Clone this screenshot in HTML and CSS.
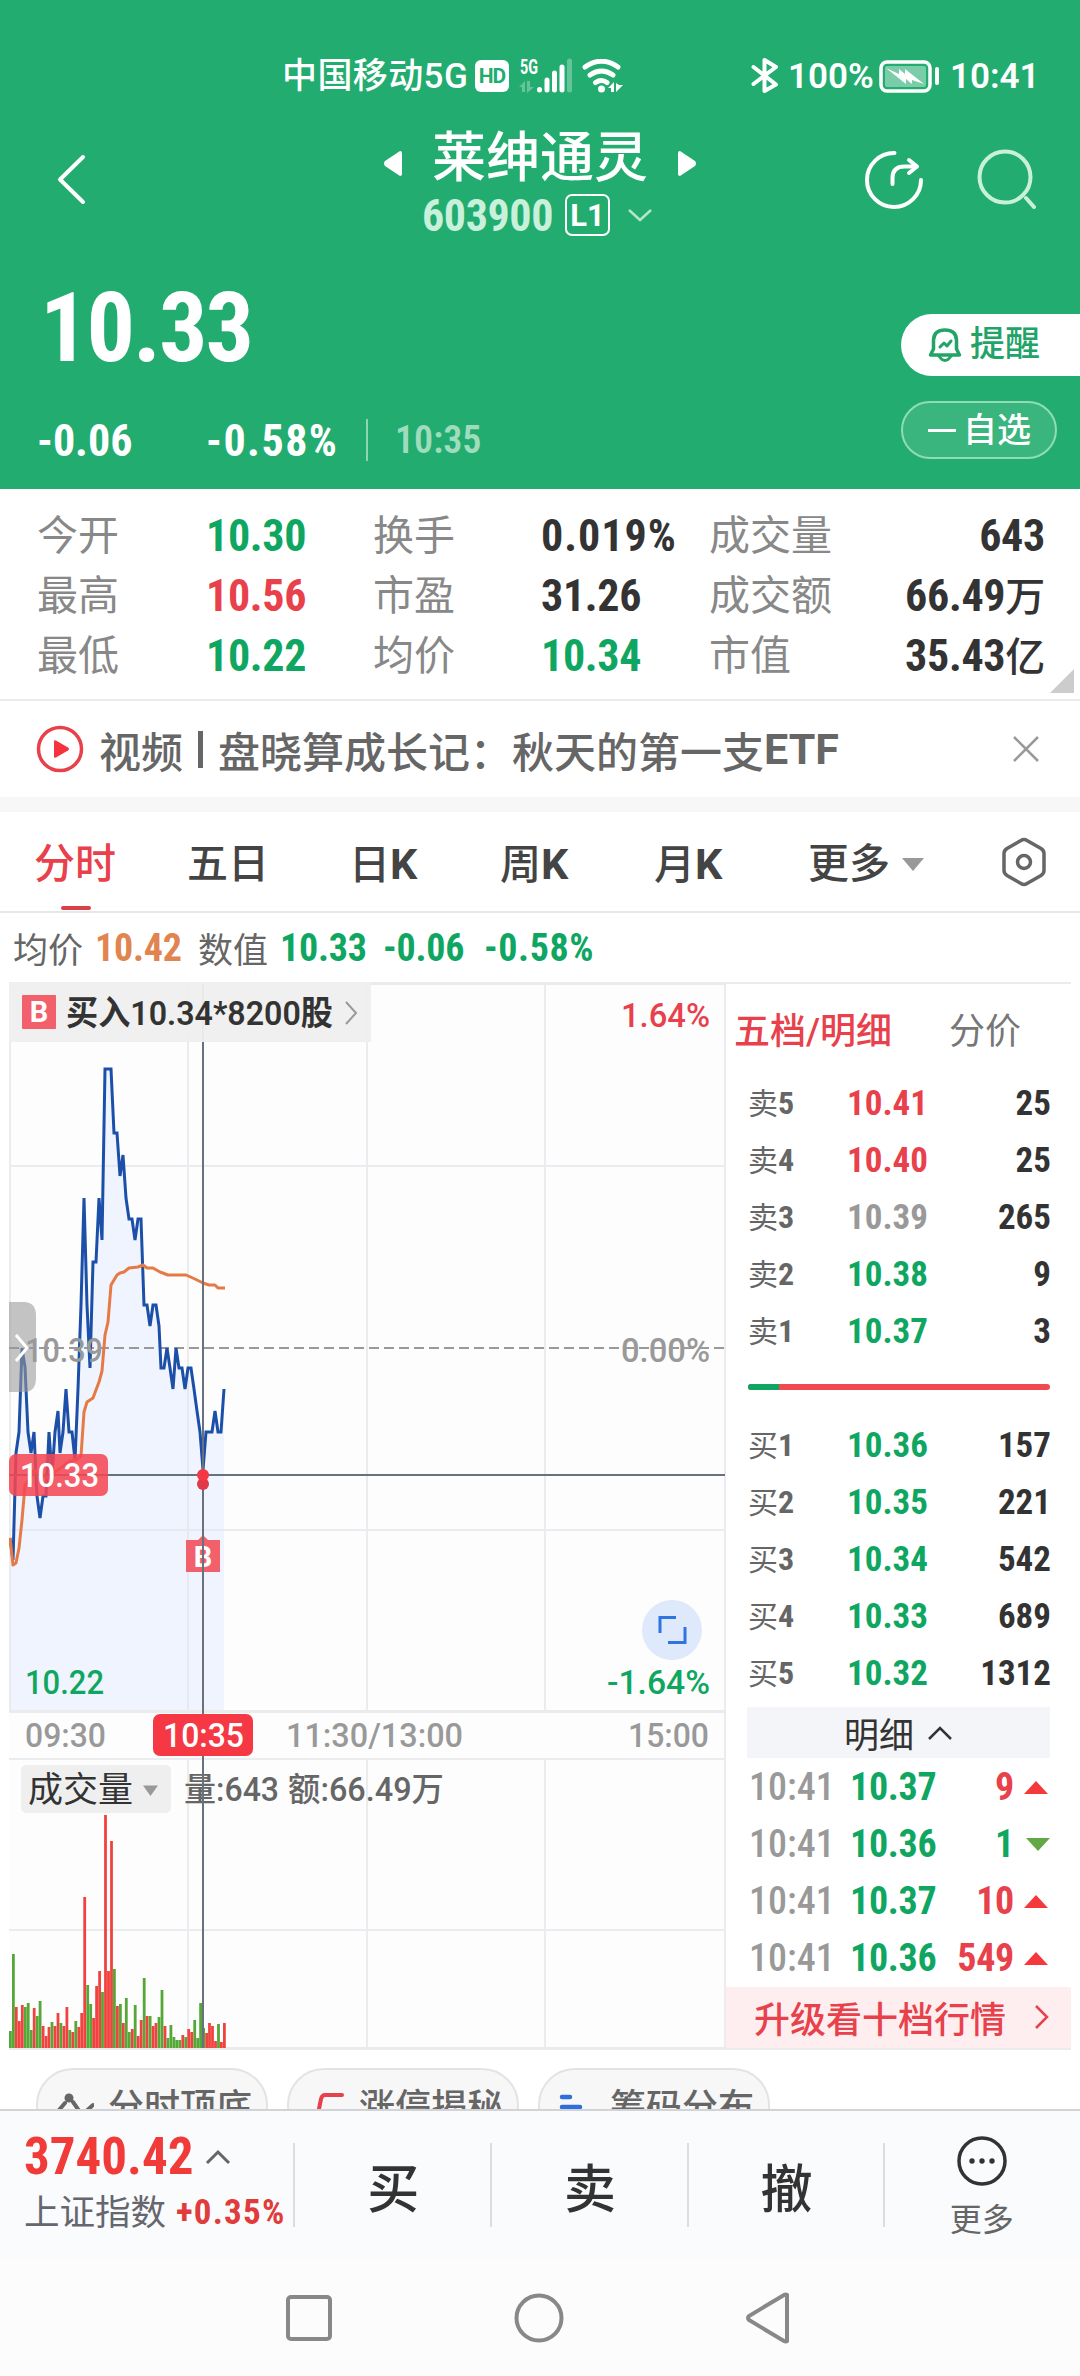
FILE: index.html
```html
<!DOCTYPE html>
<html lang="zh-CN">
<head>
	<meta charset="utf-8">
	<title>莱绅通灵 603900</title>
	<link rel="stylesheet" href="styles.css">
</head>
<body>
<div class="phone">
	<header class="top">
		<div class="status">
			<span class="carrier">中国移动5G</span>
			<span class="hd">HD</span>
			<svg class="signal" width="52" height="34" viewBox="520 58 52 34">
				<text x="520" y="73" class="sig-text" textLength="18" lengthAdjust="spacingAndGlyphs">5G</text>
				<path d="M519 86l6-6v11h-3v-5zM527 80h3v6h4l-7 6z" fill="#fff" opacity=".3"/>
				<path d="M539.500 88.500v.5M547 79v10M554.500 72v17M562 66v23" stroke="#fff" stroke-width="5" stroke-linecap="round"/>
				<path d="M569.500 60v29" stroke="#fff" stroke-width="5" stroke-linecap="round" opacity=".3"/>
			</svg>
			<svg class="wifi" width="42" height="34" viewBox="582 58 42 34">
				<g fill="none" stroke="#fff" stroke-width="5" stroke-linecap="round">
					<path d="M585 66Q601.500 54.500 618 66M590 74Q601.500 66 613 74M595.500 81.500Q601.500 77.500 607 81.500"/>
				</g>
				<circle cx="601.500" cy="88" r="3.500" fill="#fff"/>
				<path d="M608 87l6-6v10h-3v-4zM616 82v9l7-7h-4z" fill="#fff"/>
			</svg>
			<svg class="bluetooth" width="28" height="36" viewBox="750 58 28 36">
				<path d="M752.500 67L775 84.500L763.500 91V60L775 67L752.500 84" fill="none" stroke="#fff" stroke-width="4" stroke-linecap="round" stroke-linejoin="round"/>
			</svg>
			<span class="percent">100%</span>
			<svg class="battery" width="60" height="34" viewBox="878 58 60 34">
				<rect x="880" y="61" width="49" height="29" rx="6" fill="none" stroke="#fff" stroke-width="3.500"/>
				<rect x="884" y="65" width="41" height="21" rx="2" fill="#fff" opacity=".4"/>
				<path d="M885 67l13 6v-5l6 5v-5l19 15-12-4v4l-6-5v5z" fill="#fff"/>
				<path d="M936 68v14" stroke="#fff" stroke-width="4" stroke-linecap="round"/>
			</svg>
			<span class="clock">10:41</span>
		</div>

		<nav class="titlebar">
			<svg class="back" width="30" height="52" viewBox="57 153 30 52"><path d="M83 157L60 179.500L83 202" fill="none" stroke="#fff" stroke-width="4" stroke-linecap="round" stroke-linejoin="round"/></svg>
			<div class="stock">
				<div class="name">
					<svg width="18" height="27" viewBox="0 0 18 27"><path d="M16 1q2 0 2 2v21q0 2-2 2L1 16q-2-2.500 0-5z" fill="#fff"/></svg>
					<h1>莱绅通灵</h1>
					<svg width="18" height="27" viewBox="0 0 18 27"><path d="M2 1Q0 1 0 3v21q0 2 2 2L17 16q2-2.500 0-5z" fill="#fff"/></svg>
				</div>
				<div class="code">
					<span class="num">603900</span>
					<span class="level">L1</span>
					<svg width="26" height="16" viewBox="0 0 26 16"><path d="M2 3l11 10L24 3" fill="none" stroke="#b5e6cb" stroke-width="2.500"/></svg>
				</div>
			</div>
			<svg class="share" width="60" height="60" viewBox="864 150 60 60">
				<g fill="none" stroke="#fff" stroke-width="4" stroke-linecap="round" stroke-linejoin="round">
					<path d="M894.500 153A27 27 0 1 0 921 180M892.500 184v-6q0-11.500 12-11.500h12"/>
					<path d="M909 160l8 6.500-8 6.500"/>
				</g>
			</svg>
			<svg class="search" width="60" height="60" viewBox="977 149 60 60">
				<g fill="none" stroke="#c9f1d9" stroke-width="4" stroke-linecap="round">
					<circle cx="1005" cy="177" r="25.500"/>
					<path d="M1026 198l8 9"/>
				</g>
			</svg>
		</nav>

		<div class="price">
			<div class="price-left">
				<div class="now num">10.33</div>
				<div class="change">
					<span class="num diff">-0.06</span>
					<span class="num rate">-0.58%</span>
					<span class="num at">10:35</span>
				</div>
			</div>
			<div class="price-right">
				<div class="remind">
					<svg width="34" height="36" viewBox="928 328 34 36">
						<g fill="none" stroke="#22a468" stroke-width="3.500" stroke-linecap="round" stroke-linejoin="round">
							<path d="M930.500 356H959.500L956.500 350V341Q956 331 945 331T933.500 341V350Z"/>
							<path d="M939 357q6 9 12 0M940 348l4-4 3 3 4-5" stroke-width="3"/>
						</g>
					</svg>
					<span>提醒</span>
				</div>
				<div class="fav"><i></i><span>自选</span></div>
			</div>
		</div>
	</header>

	<section class="stats">
		<span>今开</span><b class="green">10.30</b><span>换手</span><b class="wide">0.019%</b><span>成交量</span><b class="right">643</b>
		<span>最高</span><b class="red">10.56</b><span>市盈</span><b>31.26</b><span>成交额</span><b class="right">66.49<em>万</em></b>
		<span>最低</span><b class="green">10.22</b><span>均价</span><b class="green">10.34</b><span>市值</span><b class="right">35.43<em>亿</em></b>
		<i class="corner"></i>
	</section>

	<section class="news">
		<svg width="48" height="48" viewBox="0 0 48 48"><circle cx="24" cy="24" r="21.500" fill="none" stroke="#e8414b" stroke-width="3.500"/><path d="M18 16.500v15q0 2 2 1l12-7q2-1.500 0-3l-12-7q-2-1-2 1z" fill="#f5333f"/></svg>
		<p>视频<i></i>盘晓算成长记：秋天的第一支<b>ETF</b></p>
		<svg class="close" width="28" height="28" viewBox="0 0 28 28"><path d="M2 2l24 24M26 2L2 26" stroke="#999" stroke-width="2.500"/></svg>
	</section>

	<section class="tabs">
		<span class="on">分时</span>
		<span>五日</span>
		<span>日<b>K</b></span>
		<span>周<b>K</b></span>
		<span>月<b>K</b></span>
		<span>更多<i></i></span>
		<svg width="44" height="50" viewBox="0 0 44 50"><path d="M19 3.500q3-2 6 0l14 8q3 2 3 5v17q0 3-3 5l-14 8q-3 2-6 0l-14-8q-3-2-3-5v-17q0-3 3-5z" fill="none" stroke="#666" stroke-width="3.500"/><circle cx="22" cy="25" r="6.500" fill="none" stroke="#666" stroke-width="3.500"/></svg>
	</section>

	<section class="info">
		<span>均价</span><b class="orange">10.42</b><span>数值</span><b class="green">10.33</b><b class="green">-0.06</b><b class="green wide">-0.58%</b>
	</section>

	<main class="board">
		<svg class="chart" width="717" height="1068" viewBox="9 982 717 1068">
			<rect x="9" y="982" width="717" height="1068" fill="#fdfdfd"/>
			<!-- 分时面积 -->
			<path id="area" fill="#eff4fe"/>
			<!-- 网格 -->
			<path stroke="#e3e5ea" stroke-opacity=".75" stroke-width="2" fill="none" d="M10 983V1711M188 983V1711M367 983V1711M545 983V1711M9 1166H725M9 1530H725M188 1759V2049M367 1759V2049M545 1759V2049M9 1759H725M9 1930H725M725 983V2049"/>
			<path stroke="#ebebeb" stroke-width="3" d="M9 983.500H726M9 1711.500H726M9 2048.500H726"/>
			<path stroke="#999" stroke-width="2" stroke-dasharray="10 5" d="M9 1348H725"/>
			<polyline id="line" fill="none" stroke="#1c4fa8" stroke-width="3"/>
			<polyline id="avg" fill="none" stroke="#e67a45" stroke-width="3" stroke-linejoin="round"/>

			<g class="axis">
				<text x="25" y="1362" fill="#999" textLength="78" lengthAdjust="spacingAndGlyphs">10.39</text>
				<text x="25" y="1694" fill="#0fa662" textLength="79" lengthAdjust="spacingAndGlyphs">10.22</text>
				<text x="621" y="1027" fill="#e8414b" textLength="89" lengthAdjust="spacingAndGlyphs">1.64%</text>
				<text x="621" y="1362" fill="#999" textLength="89" lengthAdjust="spacingAndGlyphs">0.00%</text>
				<text x="607" y="1694" fill="#0fa662" textLength="103" lengthAdjust="spacingAndGlyphs">-1.64%</text>
				<text x="25" y="1747" fill="#999" textLength="81" lengthAdjust="spacingAndGlyphs">09:30</text>
				<text x="286" y="1747" fill="#999" textLength="177" lengthAdjust="spacingAndGlyphs">11:30/13:00</text>
				<text x="628" y="1747" fill="#999" textLength="81" lengthAdjust="spacingAndGlyphs">15:00</text>
			</g>

			<!-- 侧边抽屉 -->
			<path d="M9 1302H24q12 0 12 14V1378q0 14-12 14H9z" fill="#9a9a9a" opacity=".58"/>
			<path d="M16 1335l11 13-11 13" fill="none" stroke="#fff" stroke-width="3"/>

			<!-- 成交量 -->
			<rect x="21" y="1765" width="150" height="48" rx="5" fill="#efefef"/>
			<text x="28" y="1802" class="vol-name">成交量</text>
			<path d="M143 1785.500h15l-7.500 10.500z" fill="#999"/>
			<text x="184" y="1801" class="vol-text" textLength="95" lengthAdjust="spacingAndGlyphs">量:643</text>
			<text x="288" y="1801" class="vol-text" textLength="156" lengthAdjust="spacingAndGlyphs">额:66.49万</text>
			<g id="bars"></g>

			<!-- 买入提示 -->
			<path d="M186 1540h12l5-5 5 5h12v32h-34z" fill="#f2606b"/>
			<text x="203" y="1567" class="mark" text-anchor="middle">B</text>
			<!-- 十字光标 -->
			<path stroke="#68727f" stroke-width="2" d="M203 984V2048M9 1475H725"/>
			<circle cx="203" cy="1484" r="6" fill="#e03a48"/>
			<circle cx="203" cy="1475" r="6" fill="#f53844"/>
			<rect x="9" y="1454" width="99" height="42" rx="7" fill="#f54653" fill-opacity=".87"/>
			<text x="20" y="1487" class="axis" fill="#fff" textLength="79" lengthAdjust="spacingAndGlyphs">10.33</text>
			<rect x="153" y="1714" width="100" height="42" rx="7" fill="#f53844"/>
			<text x="163" y="1747" class="axis" fill="#fff" textLength="81" lengthAdjust="spacingAndGlyphs">10:35</text>

			<rect x="9" y="982" width="362" height="60" fill="#efefef" fill-opacity=".95"/>
			<rect x="22" y="995" width="34" height="34" rx="1" fill="#f2606b"/>
			<text x="39" y="1022" class="mark" text-anchor="middle">B</text>
			<text x="66" y="1025" class="tip" textLength="267" lengthAdjust="spacingAndGlyphs">买入10.34*8200股</text>
			<path d="M346 1002l10 11-10 11" fill="none" stroke="#999" stroke-width="2"/>

			<circle cx="672" cy="1630" r="30" fill="#dfe9fc"/>
			<path d="M676 1617.500H660V1633M668 1642.500H685V1627" fill="none" stroke="#2f74e0" stroke-width="3"/>
		</svg>

		<aside class="book">
			<div class="book-tabs"><span class="on">五档/明细</span><span>分价</span></div>
			<ul>
				<li><span>卖<b>5</b></span><b class="red">10.41</b><b>25</b></li>
				<li><span>卖<b>4</b></span><b class="red">10.40</b><b>25</b></li>
				<li><span>卖<b>3</b></span><b class="gray">10.39</b><b>265</b></li>
				<li><span>卖<b>2</b></span><b class="green">10.38</b><b>9</b></li>
				<li><span>卖<b>1</b></span><b class="green">10.37</b><b>3</b></li>
			</ul>
			<div class="ratio"><i style="width:10.2%"></i></div>
			<ul>
				<li><span>买<b>1</b></span><b class="green">10.36</b><b>157</b></li>
				<li><span>买<b>2</b></span><b class="green">10.35</b><b>221</b></li>
				<li><span>买<b>3</b></span><b class="green">10.34</b><b>542</b></li>
				<li><span>买<b>4</b></span><b class="green">10.33</b><b>689</b></li>
				<li><span>买<b>5</b></span><b class="green">10.32</b><b>1312</b></li>
			</ul>
			<div class="detail-head">明细<svg width="26" height="16" viewBox="0 0 26 16"><path d="M2 14L13 3l11 11" fill="none" stroke="#333" stroke-width="2.500"/></svg></div>
			<ul class="detail">
				<li><span>10:41</span><b class="green">10.37</b><b class="red">9</b><i class="up"></i></li>
				<li><span>10:41</span><b class="green">10.36</b><b class="green">1</b><i class="down"></i></li>
				<li><span>10:41</span><b class="green">10.37</b><b class="red">10</b><i class="up"></i></li>
				<li><span>10:41</span><b class="green">10.36</b><b class="red">549</b><i class="up"></i></li>
			</ul>
			<div class="upgrade">升级看十档行情<svg width="15" height="24" viewBox="0 0 15 24"><path d="M2 1l11 11L2 23" fill="none" stroke="#e8414b" stroke-width="2.500"/></svg></div>
		</aside>
	</main>

	<section class="pills">
		<div>
			<svg width="38" height="40" viewBox="0 0 38 40"><g fill="none" stroke="#666" stroke-width="4" stroke-linecap="round"><path d="M3 17l6-7M17 9l9 13 11-10"/></g><circle cx="13" cy="5" r="4.500" fill="#666"/></svg>
			<span>分时顶底</span>
		</div>
		<div>
			<svg width="38" height="40" viewBox="0 0 38 40"><path d="M3 21h5q3 0 4-5l2-10q1-4 4-4h17" fill="none" stroke="#e8414b" stroke-width="4" stroke-linecap="round"/></svg>
			<span>涨停揭秘</span>
		</div>
		<div>
			<svg width="38" height="40" viewBox="0 0 38 40"><path d="M4 4h8M4 14h18M4 23h30" stroke="#2f6fdc" stroke-width="4.500" stroke-linecap="round"/></svg>
			<span>筹码分布</span>
		</div>
	</section>

	<footer class="trade">
		<div class="index">
			<div class="index-num"><b>3740.42</b><svg width="26" height="16" viewBox="0 0 26 16"><path d="M2 14L13 3l11 11" fill="none" stroke="#666" stroke-width="3"/></svg></div>
			<div class="index-name">上证指数<b>+0.35%</b></div>
		</div>
		<div class="act">买</div>
		<div class="act">卖</div>
		<div class="act">撤</div>
		<div class="more">
			<svg width="52" height="52" viewBox="0 0 52 52"><circle cx="26" cy="26" r="23" fill="none" stroke="#333" stroke-width="3.500"/><circle cx="16" cy="26" r="2.700" fill="#333"/><circle cx="26" cy="26" r="2.700" fill="#333"/><circle cx="36" cy="26" r="2.700" fill="#333"/></svg>
			<span>更多</span>
		</div>
	</footer>

	<div class="sysnav">
		<svg width="46" height="46" viewBox="0 0 46 46"><rect x="2" y="2" width="42" height="42" rx="3" fill="none" stroke="#888" stroke-width="4"/></svg>
		<svg width="50" height="50" viewBox="0 0 50 50"><circle cx="25" cy="25" r="22.500" fill="none" stroke="#888" stroke-width="4"/></svg>
		<svg width="46" height="52" viewBox="0 0 46 52"><path d="M42 3v46q-1 1-3 0L4 28q-2-2 0-4L39 3q2-1 3 0z" fill="none" stroke="#888" stroke-width="4"/></svg>
	</div>
</div>

<script>
	//价格线
	var price = "10,1538 13,1560 16,1453 19,1432 22,1348 25,1367 28,1432 31,1453 34,1432 37,1496 40,1518 43,1496 46,1496 49,1432 52,1475 55,1432 58,1411 60,1453 63,1432 66,1389 69,1432 72,1432 75,1460 78,1389 81,1305 84,1198 87,1305 90,1368 93,1262 96,1262 99,1198 102,1240 105,1069 111,1069 114,1133 117,1133 120,1176 123,1155 126,1198 129,1219 132,1219 135,1240 138,1219 141,1219 144,1305 147,1305 150,1326 153,1305 156,1305 159,1326 161,1368 164,1368 167,1348 170,1368 173,1389 176,1348 179,1368 182,1368 185,1389 188,1368 191,1368 194,1389 197,1411 200,1432 203,1470 206,1432 212,1432 215,1411 218,1432 221,1432 224,1389"
	//均价线
	var avg = "10,1538 13,1565 16,1563 19,1548 22,1520 25,1485 30,1478 34,1470 40,1474 48,1478 55,1472 62,1467 70,1461 76,1460 81,1456 84,1412 87,1402 93,1398 99,1382 102,1371 105,1335 108,1322 111,1285 114,1280 117,1275 120,1273 124,1272 129,1268 138,1267 143,1265 147,1268 153,1268 160,1272 168,1275 186,1275 195,1279 203,1283 209,1285 215,1285 218,1288 225,1288"
	//每分钟成交量,负数为绿柱
	var vol = [-17,-94,41,27,43,-41,-45,-18,40,-32,-47,22,12,21,-26,22,35,-25,22,41,-18,16,-27,21,35,151,-63,-44,30,62,77,-56,233,77,207,-79,42,-44,25,-50,-16,19,-43,12,28,-70,32,-32,22,25,-31,-58,22,-10,-23,-11,-8,-8,13,-11,19,16,-28,-10,-45,-20,15,25,22,7,-24,6,25]

	document.getElementById("line").setAttribute("points", price)
	document.getElementById("avg").setAttribute("points", avg)
	document.getElementById("area").setAttribute("d", "M" + price + " 224,1711 10,1711z")
	var html = ""
	for(var i=0;i<vol.length;i++){
		var x = 9 + i * 214 / (vol.length - 1)
		var h = Math.abs(vol[i])
		html += `<rect x="${x.toFixed(1)}" y="${2048-h}" width="2.8" height="${h}" fill="${vol[i]<0 ? '#55a838' : '#f0423f'}"/>`
	}
	document.getElementById("bars").innerHTML = html
</script>
</body>
</html>
```
FILE: styles.css
```css
*{box-sizing:border-box;}
body{
	margin:0;
	background:#fff;
	font-family:Roboto,"Noto Sans CJK SC",sans-serif;
	color:#333;
}
h1,p,ul{margin:0;padding:0;list-style:none;}
i,em{font-style:normal;}
svg{display:block;flex:none;}
b{font-weight:700;font-stretch:75%;}
.phone{
	width:1080px;height:2376px;
	display:flex;flex-direction:column;
	overflow:hidden;
}
.red{color:#e8414b;}
.green{color:#0fa662;}
.gray{color:#999;}
.orange{color:#e08450;}
.num{font-weight:700;font-stretch:75%;}

/* 顶部 */
.top{
	height:489px;flex:none;
	background:#22ac6f;
	color:#fff;
}
.status{
	height:100px;
	padding:52px 0 0 282px;
	display:flex;align-items:center;
	font-size:35px;line-height:48px;font-weight:500;
	white-space:nowrap;
}
.carrier{width:193px;padding-top:2px;letter-spacing:.4px;}
.hd{
	width:34px;height:32px;
	border-radius:6px;
	background:#fff;color:#22ac6f;
	font-size:21px;line-height:33px;font-weight:700;
	text-align:center;letter-spacing:-1px;
}
.signal{margin-left:11px;overflow:visible;}
.sig-text{font-size:20px;font-weight:700;fill:#fff;}
.wifi{margin-left:10px;}
.bluetooth{margin-left:127px;}
.percent{width:91px;margin-left:9px;padding-top:1px;font-weight:600;}
.battery{margin-right:11px;}
.clock{padding-top:1px;font-weight:600;}
.titlebar{
	height:160px;
	padding:27px 43px 0 57px;
	display:flex;
}
.back{margin-top:26px;}
.stock{width:460px;margin-left:223px;}
.name{
	height:60px;
	display:flex;align-items:center;justify-content:center;
	gap:30px;
}
.name svg{margin-top:13px;}
.name h1{padding-top:4px;font-size:54px;line-height:60px;font-weight:500;}
.code{
	height:44px;margin-top:6px;
	padding-left:112px;
	display:flex;align-items:center;
}
.code .num{width:143px;padding-top:1px;font-size:44px;line-height:44px;letter-spacing:-.4px;color:#c8f0da;}
.level{
	width:45px;height:42px;
	border:2px solid #fff;border-radius:7px;
	font-size:31px;line-height:39px;font-weight:700;
	text-align:center;
}
.code svg{margin-left:17px;}
.share{margin:23px 0 0 94px;}
.search{margin:22px 0 0 53px;}
.price{display:flex;justify-content:space-between;}
.price-left{padding-left:37px;}
.now{
	height:130px;margin-top:3px;
	padding-left:3px;
	font-size:96px;line-height:130px;letter-spacing:-2px;
}
.change{
	height:42px;margin-top:26px;
	display:flex;align-items:center;
	font-size:44px;
}
.diff{width:169px;padding-top:1px;}
.rate{width:160px;padding-top:1px;letter-spacing:1.500px;}
.at{
	height:42px;
	padding-left:27px;
	border-left:2px solid #8fd5b2;
	font-size:38px;line-height:42px;
	color:#9fdcbd;
}
.price-left .at{font-weight:600;}
.price-right{width:179px;padding-top:54px;}
.remind{
	height:62px;
	padding-left:27px;
	display:flex;align-items:center;gap:8px;
	border-radius:31px 0 0 31px;
	background:#fff;color:#22a468;
	font-size:35px;line-height:50px;font-weight:500;
}
.fav{
	width:156px;height:58px;margin-top:25px;
	padding-left:25px;
	display:flex;align-items:center;gap:7px;
	border:2px solid #90dcb4;border-radius:29px;
	background:#3ab57e;
	font-size:34px;line-height:50px;font-weight:500;
}
.fav i{width:28px;height:3px;background:#fff;}

/* 行情数据 */
.stats{
	position:relative;
	height:212px;flex:none;
	padding:17px 35px 0 37px;
	display:grid;
	grid-template-columns:169px 167px 168px 168px 150px 1fr;
	grid-auto-rows:60px;
	line-height:60px;
	border-bottom:2px solid #ebebeb;
	white-space:nowrap;
}
.stats span{font-size:41px;color:#888;}
.stats b{font-size:44px;letter-spacing:-.3px;}
.stats em{font-size:40px;font-weight:500;}
.stats .wide{letter-spacing:1px;}
.right{text-align:right;}
.corner{
	position:absolute;right:6px;bottom:6px;
	border-left:24px solid transparent;
	border-bottom:24px solid #ccc;
}
.news{
	height:111px;flex:none;
	padding:0 40px 0 36px;
	display:flex;align-items:center;
	border-bottom:15px solid #f7f7f7;
}
.news p{
	margin-left:15px;flex:1;
	display:flex;align-items:center;
	font-size:42px;font-weight:500;color:#666;
	white-space:nowrap;
}
.news p i{width:5px;height:37px;margin:0 15px;background:#666;}
.news p b{font-size:43px;font-stretch:100%;}
.tabs{
	height:101px;flex:none;
	padding:0 35px 0 34px;
	display:grid;
	grid-template-columns:153px 162px 151px 154px 154px 194px 1fr;
	align-items:center;
	border-bottom:2px solid #e8e8e8;
	font-size:41px;font-weight:500;color:#444;
}
.tabs span{position:relative;height:99px;line-height:105px;}
.tabs b{font-size:43px;font-stretch:100%;}
.tabs .on{color:#e8414b;}
.tabs .on::after{
	content:"";
	position:absolute;left:27px;bottom:1px;
	width:30px;height:4px;
	border-radius:2px;
	background:#d9404c;
}
.tabs i{
	display:inline-block;
	margin:0 0 7px 12px;
	border:11px solid transparent;
	border-top:13px solid #999;border-bottom:0;
}
.info{
	height:69px;flex:none;
	padding-left:13px;
	display:flex;align-items:center;
	font-size:38px;color:#666;
	white-space:nowrap;
}
.info span{width:82px;font-size:35px;}
.info b{width:101px;letter-spacing:-.2px;}
.info span + b{width:103px;}
.info .wide{letter-spacing:.6px;}

/* 分时图与五档 */
.board{
	height:1068px;flex:none;
	margin:0 9px;
	display:flex;
}
.axis{font-size:34px;font-weight:500;}
.mark{font-size:29px;font-weight:700;fill:#fff;}
.tip{font-size:34px;font-weight:600;fill:#333;}
.vol-name{font-size:35px;fill:#333;}
.vol-text{font-size:33px;font-weight:500;fill:#666;}
.book{
	flex:1;
	border-top:2px solid #ebebeb;border-bottom:2px solid #ebebeb;
	white-space:nowrap;
}
.book-tabs{
	height:91px;
	padding:0 50px 3px 8px;
	display:flex;align-items:center;justify-content:space-between;
	font-size:36px;color:#777;
}
.book-tabs .on{font-weight:500;color:#e8414b;}
.book ul{padding:0 20px 0 22px;}
.book li{
	height:57px;
	display:grid;
	grid-template-columns:99px 1fr 100px;
	align-items:center;
	line-height:57px;
	font-size:35px;
}
.book li span{font-size:30px;color:#666;}
.book li span b{font-size:32px;}
.book li b:last-child{text-align:right;}
.ratio{
	height:6px;margin:24px 21px 27px 22px;
	border-radius:3px;
	background:#f04a50;
	overflow:hidden;
}
.ratio i{display:block;height:6px;background:#0fa662;}
.detail-head{
	height:51px;margin:5px 21px 1px 21px;
	display:flex;align-items:center;justify-content:center;gap:13px;
	background:#f3f5f9;
	font-size:35px;
}
.book .detail{padding:0 21px 0 23px;}
.book .detail li{
	grid-template-columns:101px 83px 1fr 36px;
	font-size:38px;
}
.book .detail b{letter-spacing:-.3px;}
.book .detail li span{font-size:38px;font-weight:500;font-stretch:75%;color:#999;}
.book .detail li b:nth-child(3){text-align:right;}
.up,.down{
	justify-self:end;
	margin-right:2px;
	border:12px solid transparent;
}
.up{border-bottom:13px solid #f5383c;border-top:0;}
.down{border-top:13px solid #62a845;border-bottom:0;margin-right:0;}
.upgrade{
	height:61px;
	padding:0 22px 1px 28px;
	display:flex;align-items:center;justify-content:space-between;
	background:#ffeeef;color:#e8414b;
	font-size:36px;font-weight:500;
}
.pills{
	height:59px;flex:none;
	padding:18px 36px 0;
	display:flex;gap:19px;
	overflow:hidden;
}
.pills div{
	width:232px;height:74px;flex:none;
	padding-left:18px;
	display:flex;align-items:center;gap:14px;
	border:2px solid #e3e3e3;border-radius:37px;
	background:#f7f7f7;
	font-size:36px;font-weight:500;color:#666;
	white-space:nowrap;
}
.pills svg{margin-top:16px;}
.pills span{margin-top:-2px;}

/* 底部 */
.trade{
	height:151px;flex:none;
	display:flex;
	border-top:2px solid #d2d3d6;
	background:#fafbfd;
}
.index{width:294px;padding:18px 0 0 24px;white-space:nowrap;}
.index-num{display:flex;align-items:center;gap:12px;line-height:56px;}
.index-num b{font-size:51px;color:#f03b38;}
.index-name{
	margin-top:2px;
	display:flex;align-items:center;gap:10px;
	font-size:35.500px;line-height:52px;color:#66666e;
}
.index-name b{font-size:35px;letter-spacing:1.200px;color:#e03c3c;}
.act,.more{
	position:relative;
	width:197px;
	display:flex;align-items:center;justify-content:center;
	font-size:52px;font-weight:500;
}
.act{padding:0 0 1px 3px;}
.act::before,.more::before{
	content:"";
	position:absolute;left:0;top:32px;
	width:2px;height:84px;
	background:#dcdde0;
}
.more{
	flex-direction:column;
	justify-content:flex-start;
	padding-top:24px;
	font-size:32px;font-weight:400;color:#666;
}
.more span{line-height:46px;margin-top:10px;}
.sysnav{
	flex:1;
	padding:0 289px 0 286px;
	display:flex;align-items:center;justify-content:space-between;
	background:#fcfcfc;
}
```
